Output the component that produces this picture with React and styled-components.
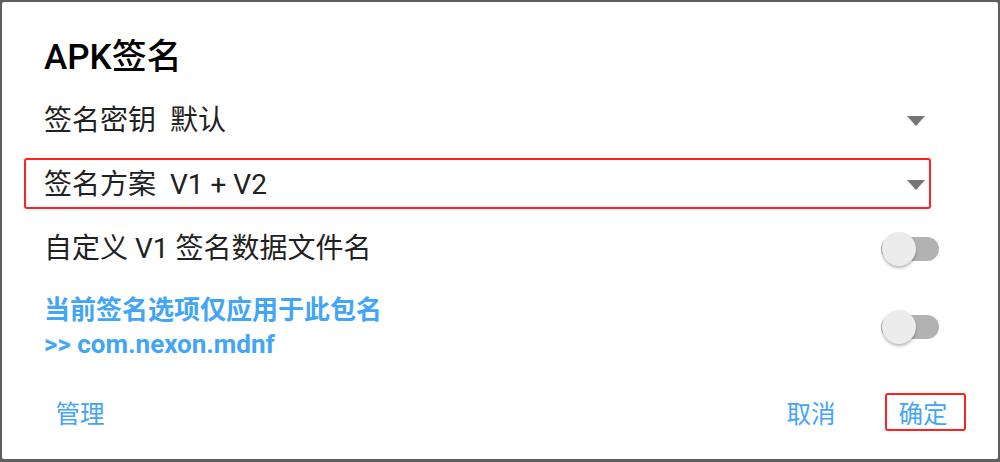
import React, { useState } from 'react';
import styled, { createGlobalStyle } from 'styled-components';

const GlobalStyle = createGlobalStyle`
    html, body {
        margin: 0;
        padding: 0;
        background: #5f5f5f;
    }
    body {
        font-family: Roboto, "Noto Sans CJK SC", "Noto Sans", sans-serif;
    }
`

const ArrowDown = () => (
    <svg width="18" height="10" viewBox="0 0 18 10">
        <polygon points="0,0 18,0 9,10" fill="#757575" />
    </svg>
)

const App = () => {
    const [customName, setCustomName] = useState(false);
    const [onlyThisPackage, setOnlyThisPackage] = useState(false);

    return (
        <Page>
            <GlobalStyle />
            <Dialog>
                <Title>APK签名</Title>
                <SpinnerRow>
                    <Label>签名密钥</Label>
                    <Value>默认</Value>
                    <Spacer />
                    <ArrowBox><ArrowDown /></ArrowBox>
                </SpinnerRow>
                <SpinnerRow $marked>
                    <Label>签名方案</Label>
                    <Value>V1 + V2</Value>
                    <Spacer />
                    <ArrowBox><ArrowDown /></ArrowBox>
                </SpinnerRow>
                <SwitchRow>
                    <Label>自定义 V1 签名数据文件名</Label>
                    <Spacer />
                    <Switch onClick={() => setCustomName(!customName)}>
                        <Track $on={customName}>
                            <Thumb $on={customName} />
                        </Track>
                    </Switch>
                </SwitchRow>
                <SwitchRow $tall>
                    <Hint>
                        当前签名选项仅应用于此包名<br />
                        &gt;&gt; com.nexon.mdnf
                    </Hint>
                    <Spacer />
                    <Switch onClick={() => setOnlyThisPackage(!onlyThisPackage)}>
                        <Track $on={onlyThisPackage}>
                            <Thumb $on={onlyThisPackage} />
                        </Track>
                    </Switch>
                </SwitchRow>
                <Footer>
                    <TextButton>管理</TextButton>
                    <Spacer />
                    <TextButton>取消</TextButton>
                    <TextButton $marked>确定</TextButton>
                </Footer>
            </Dialog>
        </Page>
    )
}

const Page = styled.div`
    padding: 2px 2px 3px 2px;
    height: 462px;
    box-sizing: border-box;
`

const Dialog = styled.div`
    display: flex;
    flex-direction: column;
    background: #ffffff;
    border-radius: 2px;
    height: 457px;
    box-sizing: border-box;
    padding: 36px 59px 0 42px;
`

const Title = styled.h2`
    margin: 0 0 11px 0;
    font-size: 35px;
    font-weight: 500;
    line-height: 40px;
    color: #000000;
`

const SpinnerRow = styled.div`
    position: relative;
    display: flex;
    align-items: center;
    height: 64px;

    ${({ $marked }) => $marked && `
        &::after {
            content: '';
            position: absolute;
            top: 5px;
            bottom: 8px;
            left: -20px;
            right: 8px;
            border: 2px solid #ff2121;
            border-radius: 3px;
            pointer-events: none;
        }
    `}
`

const SwitchRow = styled.div`
    display: flex;
    align-items: center;
    height: ${({ $tall }) => ($tall ? '92px' : '64px')};
`

const Label = styled.span`
    font-size: 28px;
    line-height: 34px;
    color: #212121;
`

const Value = styled.span`
    font-size: 28px;
    line-height: 34px;
    color: #212121;
    margin-left: 14px;
`

const Spacer = styled.div`
    flex: 1;
`

const ArrowBox = styled.div`
    display: flex;
    margin-right: 14px;
`

const Hint = styled.div`
    font-size: 26px;
    font-weight: 700;
    line-height: 34px;
    color: #42a5f5;
`

const Switch = styled.div`
    display: flex;
    align-items: center;
    height: 34px;
    cursor: pointer;
`

const Track = styled.div`
    position: relative;
    width: 58px;
    height: 24px;
    border-radius: 12px;
    background: ${({ $on }) => ($on ? '#90caf9' : '#b2b2b2')};
`

const Thumb = styled.div`
    position: absolute;
    top: -5px;
    left: ${({ $on }) => ($on ? '23px' : '1px')};
    width: 34px;
    height: 34px;
    border-radius: 50%;
    background: ${({ $on }) => ($on ? '#42a5f5' : '#ececec')};
    box-shadow: 0 2px 3px rgba(0, 0, 0, 0.28);
`

const Footer = styled.div`
    display: flex;
    align-items: center;
    gap: 31px;
    margin: 20px -27px 0 -2px;
    height: 38px;
`

const TextButton = styled.button`
    box-sizing: border-box;
    width: 81px;
    height: 38px;
    padding: 0 13px 0 8px;
    background: none;
    border: 2px solid ${({ $marked }) => ($marked ? '#ff2121' : 'transparent')};
    border-radius: 3px;
    font-family: Roboto, "Noto Sans CJK SC", sans-serif;
    font-size: 24.5px;
    color: #42a5f5;
    text-align: center;
    cursor: pointer;
`

export default App
